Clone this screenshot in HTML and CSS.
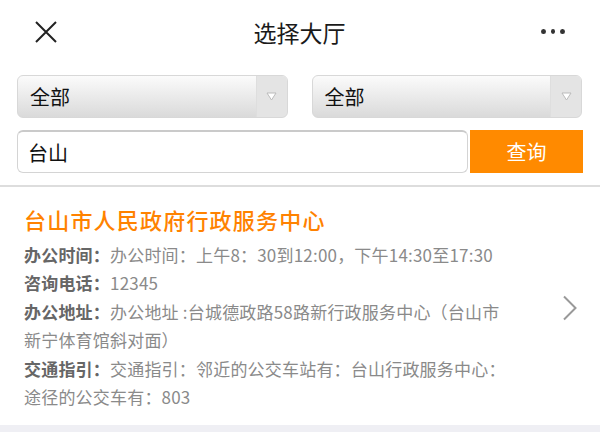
FILE: index.html
```html
<!DOCTYPE html>
<html lang="zh-CN">
<head>
  <meta charset="UTF-8" />
  <meta name="viewport" content="width=device-width, initial-scale=1" />
  <title>选择大厅</title>
  <link rel="stylesheet" href="styles.css">
</head>
<body>
  <header class="topbar">
    <span class="close" aria-label="关闭">
      <svg width="24" height="24" viewBox="0 0 24 24"><path d="M2 2 L22 22 M22 2 L2 22" stroke="#222" stroke-width="2" fill="none"/></svg>
    </span>
    <h1>选择大厅</h1>
    <span class="more" aria-label="更多"><i></i><i></i><i></i></span>
  </header>

  <section class="filters">
    <div class="select">
      <span class="select-text">全部</span>
      <span class="select-arrow"><svg width="11" height="9" viewBox="0 0 11 9"><path d="M1 1 H10 L5.5 8 Z" fill="#fff" stroke="#bbb" stroke-width="1"/></svg></span>
    </div>
    <div class="select">
      <span class="select-text">全部</span>
      <span class="select-arrow"><svg width="11" height="9" viewBox="0 0 11 9"><path d="M1 1 H10 L5.5 8 Z" fill="#fff" stroke="#bbb" stroke-width="1"/></svg></span>
    </div>
  </section>

  <form class="search">
    <input class="search-input" type="text" value="台山">
    <button class="search-btn" type="button">查询</button>
  </form>

  <article class="hall">
    <div class="hall-body">
      <h2>台山市人民政府行政服务中心</h2>
      <p><b>办公时间：</b>办公时间：上午8：30到12:00，下午14:30至17:30</p>
      <p><b>咨询电话：</b>12345</p>
      <p><b>办公地址：</b>办公地址 :台城德政路58路新行政服务中心（台山市新宁体育馆斜对面）</p>
      <p><b>交通指引：</b>交通指引：邻近的公交车站有：台山行政服务中心：途径的公交车有：803</p>
    </div>
    <span class="chevron">
      <svg width="16" height="26" viewBox="0 0 16 26"><path d="M2 1.5 L13.5 13 L2 24.5" stroke="#999" stroke-width="2" fill="none"/></svg>
    </span>
  </article>
  <div class="gap"></div>
</body>
</html>
```

FILE: styles.css
```css
body {
  margin: 0;
  background: #fff;
  font-family: "Noto Sans CJK SC", "Noto Sans", sans-serif;
  color: #222;
}
.topbar {
  height: 64px;
  display: flex;
  align-items: center;
  justify-content: space-between;
  padding: 0 35px 0 34px;
}
.topbar h1 {
  margin: 0;
  font-size: 23px;
  font-weight: 400;
  color: #1a1a1a;
}
.close {
  display: flex;
  width: 24px;
  height: 24px;
  margin-top: -1px;
}
.more {
  display: flex;
  gap: 5px;
  width: 24px;
  margin-top: -1px;
}
.more i {
  width: 5px;
  height: 5px;
  border-radius: 50%;
  background: #333;
}
.filters {
  display: grid;
  grid-template-columns: 1fr 1fr;
  gap: 24px;
  padding: 11px 18px 0 17px;
}
.select {
  height: 43px;
  box-sizing: border-box;
  display: flex;
  border: 1px solid #d8d8d8;
  border-radius: 6px;
  background: linear-gradient(#fbfbfb, #dadada);
  overflow: hidden;
}
.select-text {
  flex: 1;
  display: flex;
  align-items: center;
  padding-left: 12px;
  font-size: 20px;
  color: #111;
}
.select-arrow {
  width: 30px;
  display: flex;
  align-items: center;
  justify-content: center;
  background: #e4e4e4;
  border-left: 1px solid #dedede;
}
.search {
  display: flex;
  gap: 2px;
  margin: 0;
  padding: 12px 17px 12px 17px;
  border-bottom: 2px solid #ddd;
}
.search-input {
  flex: 1;
  height: 43px;
  box-sizing: border-box;
  border: 1px solid #d4d4d4;
  border-top: 2px solid #cacaca;
  border-radius: 6px;
  padding: 0 10px;
  font-family: inherit;
  font-size: 20px;
  color: #111;
  outline: none;
}
.search-btn {
  width: 113px;
  height: 43px;
  border: none;
  background: #ff8a00;
  color: #fff;
  font-family: inherit;
  font-size: 20px;
}
.hall {
  display: flex;
  align-items: center;
  padding: 17px 22px 14px 24px;
}
.hall-body {
  width: 488px;
}
.hall h2 {
  margin: 0 0 7px;
  font-size: 22px;
  line-height: 30px;
  font-weight: 500;
  color: #ff8200;
  letter-spacing: 1.2px;
}
.hall p {
  margin: 0;
  font-size: 17px;
  line-height: 28.4px;
  color: #8a8a8a;
  letter-spacing: 0.2px;
}
.hall b {
  color: #666;
  font-weight: 700;
}
.chevron {
  margin-left: auto;
  display: flex;
}
.gap {
  height: 12px;
  background: #efeff4;
}
```
